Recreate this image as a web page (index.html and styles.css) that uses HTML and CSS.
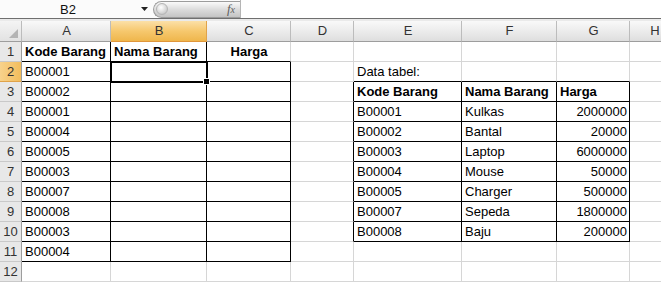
FILE: index.html
```html
<!DOCTYPE html>
<html lang="id">
<head>
    <meta charset="UTF-8">
    <title>Data Barang</title>
    <link rel="stylesheet" href="styles.css">
</head>
<body>
    <!-- Formula bar -->
    <div class="formula-bar">
        <div class="name-box">B2</div>
        <div class="dropdown">
            <svg width="7" height="4" viewBox="0 0 7 4"><polygon points="0,0 7,0 3.5,4" fill="#222"/></svg>
        </div>
        <div class="fx-pill">
            <span class="knob"></span>
            <span class="fx">f<span class="fx-x">x</span></span>
        </div>
        <div class="formula-input"></div>
    </div>

    <!-- Sheet grid -->
    <div class="sheet">
        <table class="grid">
            <colgroup>
                <col class="w-head">
                <col class="w-a">
                <col class="w-b">
                <col class="w-c">
                <col class="w-d">
                <col class="w-e">
                <col class="w-f">
                <col class="w-g">
                <col class="w-h">
            </colgroup>
            <thead>
                <tr>
                    <th class="corner">
                        <svg width="9" height="9" viewBox="0 0 9 9"><polygon points="9,0 9,9 0,9" fill="#b4b4b4"/></svg>
                    </th>
                    <th class="col-head">A</th>
                    <th class="col-head selected">B</th>
                    <th class="col-head">C</th>
                    <th class="col-head">D</th>
                    <th class="col-head">E</th>
                    <th class="col-head">F</th>
                    <th class="col-head">G</th>
                    <th class="col-head">H</th>
                </tr>
            </thead>
            <tbody>
                <tr>
                    <th class="row-head">1</th>
                    <td class="bold box-r box-b">Kode Barang</td>
                    <td class="bold box-r box-b">Nama Barang</td>
                    <td class="bold center box-b">Harga</td>
                    <td></td><td></td><td></td><td></td><td></td>
                </tr>
                <tr>
                    <th class="row-head selected">2</th>
                    <td class="box-r box-b">B00001</td>
                    <td class="box-r box-b active"></td>
                    <td class="box-r box-b"></td>
                    <td></td>
                    <td class="box-b">Data tabel:</td>
                    <td class="box-b"></td>
                    <td class="box-b"></td>
                    <td></td>
                </tr>
                <tr>
                    <th class="row-head">3</th>
                    <td class="box-r box-b">B00002</td>
                    <td class="box-r box-b"></td>
                    <td class="box-r box-b"></td>
                    <td class="box-r"></td>
                    <td class="bold box-r box-b">Kode Barang</td>
                    <td class="bold box-r box-b">Nama Barang</td>
                    <td class="bold box-r box-b">Harga</td>
                    <td></td>
                </tr>
                <tr>
                    <th class="row-head">4</th>
                    <td class="box-r box-b">B00001</td>
                    <td class="box-r box-b"></td>
                    <td class="box-r box-b"></td>
                    <td class="box-r"></td>
                    <td class="box-r box-b">B00001</td>
                    <td class="box-r box-b">Kulkas</td>
                    <td class="num box-r box-b">2000000</td>
                    <td></td>
                </tr>
                <tr>
                    <th class="row-head">5</th>
                    <td class="box-r box-b">B00004</td>
                    <td class="box-r box-b"></td>
                    <td class="box-r box-b"></td>
                    <td class="box-r"></td>
                    <td class="box-r box-b">B00002</td>
                    <td class="box-r box-b">Bantal</td>
                    <td class="num box-r box-b">20000</td>
                    <td></td>
                </tr>
                <tr>
                    <th class="row-head">6</th>
                    <td class="box-r box-b">B00005</td>
                    <td class="box-r box-b"></td>
                    <td class="box-r box-b"></td>
                    <td class="box-r"></td>
                    <td class="box-r box-b">B00003</td>
                    <td class="box-r box-b">Laptop</td>
                    <td class="num box-r box-b">6000000</td>
                    <td></td>
                </tr>
                <tr>
                    <th class="row-head">7</th>
                    <td class="box-r box-b">B00003</td>
                    <td class="box-r box-b"></td>
                    <td class="box-r box-b"></td>
                    <td class="box-r"></td>
                    <td class="box-r box-b">B00004</td>
                    <td class="box-r box-b">Mouse</td>
                    <td class="num box-r box-b">50000</td>
                    <td></td>
                </tr>
                <tr>
                    <th class="row-head">8</th>
                    <td class="box-r box-b">B00007</td>
                    <td class="box-r box-b"></td>
                    <td class="box-r box-b"></td>
                    <td class="box-r"></td>
                    <td class="box-r box-b">B00005</td>
                    <td class="box-r box-b">Charger</td>
                    <td class="num box-r box-b">500000</td>
                    <td></td>
                </tr>
                <tr>
                    <th class="row-head">9</th>
                    <td class="box-r box-b">B00008</td>
                    <td class="box-r box-b"></td>
                    <td class="box-r box-b"></td>
                    <td class="box-r"></td>
                    <td class="box-r box-b">B00007</td>
                    <td class="box-r box-b">Sepeda</td>
                    <td class="num box-r box-b">1800000</td>
                    <td></td>
                </tr>
                <tr>
                    <th class="row-head">10</th>
                    <td class="box-r box-b">B00003</td>
                    <td class="box-r box-b"></td>
                    <td class="box-r box-b"></td>
                    <td class="box-r"></td>
                    <td class="box-r box-b">B00008</td>
                    <td class="box-r box-b">Baju</td>
                    <td class="num box-r box-b">200000</td>
                    <td></td>
                </tr>
                <tr>
                    <th class="row-head">11</th>
                    <td class="box-r box-b">B00004</td>
                    <td class="box-r box-b"></td>
                    <td class="box-r box-b"></td>
                    <td></td><td></td><td></td><td></td><td></td>
                </tr>
                <tr>
                    <th class="row-head">12</th>
                    <td></td><td></td><td></td><td></td><td></td><td></td><td></td><td></td>
                </tr>
            </tbody>
        </table>
    </div>
</body>
</html>
```

FILE: styles.css
```css
body {
    margin: 0;
    width: 661px;
    height: 288px;
    overflow: hidden;
    background-color: #ffffff;
    font-family: "Liberation Sans", Arial, sans-serif;
}

/* Formula bar */
.formula-bar {
    display: flex;
    align-items: center;
    height: 18px;
    background-color: #fbfbfb;
    border-bottom: 1px solid #6f6f6f;
}
.name-box {
    width: 136px;
    text-align: center;
    font-size: 13px;
    color: #111;
}
.dropdown {
    width: 17px;
    display: flex;
    align-items: center;
    padding-left: 5px;
    box-sizing: border-box;
}
.fx-pill {
    display: flex;
    align-items: center;
    justify-content: space-between;
    width: 87px;
    height: 17px;
    box-sizing: border-box;
    border: 1px solid #9c9c9c;
    border-right: none;
    border-radius: 9px 0 0 9px;
    background: linear-gradient(#fafafa, #dcdcdc 50%, #c4c4c4);
    padding: 0 5px 0 2px;
}
.knob {
    width: 12px;
    height: 12px;
    border-radius: 50%;
    background: radial-gradient(circle at 40% 35%, #ffffff, #d6d6d6 60%, #b5b5b5);
    border: 1px solid #b5b5b5;
    box-sizing: border-box;
}
.fx {
    font-family: "Liberation Serif", "Times New Roman", serif;
    font-style: italic;
    font-size: 13px;
    color: #5e5e5e;
}
.fx-x {
    font-size: 10px;
}
.formula-input {
    flex: 1;
    height: 18px;
    background-color: #ffffff;
    border-left: 1px solid #b5b5b5;
}

/* Sheet */
.sheet {
    padding-top: 2px;
    background-color: #eaeaea;
}
.grid {
    border-collapse: separate;
    border-spacing: 0;
    table-layout: fixed;
    width: 680px;
    font-size: 13px;
    background-color: #ffffff;
}
.w-head { width: 22px; }
.w-a { width: 89px; }
.w-b { width: 96px; }
.w-c { width: 84px; }
.w-d { width: 63px; }
.w-e { width: 108px; }
.w-f { width: 95px; }
.w-g { width: 73px; }
.w-h { width: 50px; }

.grid th,
.grid td {
    box-sizing: border-box;
    height: 20px;
    padding: 0 2px 0 3px;
    border-right: 1px solid #d6d6d6;
    border-bottom: 1px solid #d6d6d6;
    white-space: nowrap;
    overflow: hidden;
    vertical-align: bottom;
    line-height: 18px;
    color: #000;
}

.col-head {
    height: 21px !important;
    font-weight: normal;
    color: #333 !important;
    text-align: center;
    background: linear-gradient(#f9f9f9, #ececec 50%, #dedede);
    border-right: 1px solid #bcbcbc !important;
    border-bottom: 1px solid #9d9d9d !important;
    vertical-align: middle !important;
}
.col-head.selected {
    background: linear-gradient(#fbe0a8, #f6c86e 50%, #efb64c);
    border-right-color: #e0a34a !important;
    border-bottom-color: #e0963a !important;
}
.corner {
    background: linear-gradient(#f4f4f4, #e2e2e2);
    border-right: 1px solid #bcbcbc !important;
    border-bottom: 1px solid #9d9d9d !important;
    text-align: right;
    vertical-align: bottom;
    padding: 0 3px 3px 0 !important;
    line-height: 0 !important;
}

.row-head {
    font-weight: normal;
    color: #333 !important;
    text-align: center;
    padding: 0 !important;
    background-color: #e8e8e8;
    border-right: 1px solid #9d9d9d !important;
    border-bottom: 1px solid #c9c9c9 !important;
}
.row-head.selected {
    background: linear-gradient(90deg, #f8d28c, #f2bd5c);
    border-bottom-color: #e0a34a !important;
}

/* Cell content */
.bold { font-weight: bold; }
.center { text-align: center; }
.num { text-align: right; }

/* Black cell borders */
.box-r { border-right-color: #000 !important; }
.box-b { border-bottom-color: #000 !important; }

/* Active cell B2 */
.grid .active {
    position: relative;
    overflow: visible;
    outline: 2px solid #000;
    outline-offset: -1px;
    z-index: 1;
}
.active::after {
    content: "";
    position: absolute;
    right: -4px;
    bottom: -4px;
    width: 5px;
    height: 5px;
    background-color: #000;
    border: 1px solid #fff;
}
```
